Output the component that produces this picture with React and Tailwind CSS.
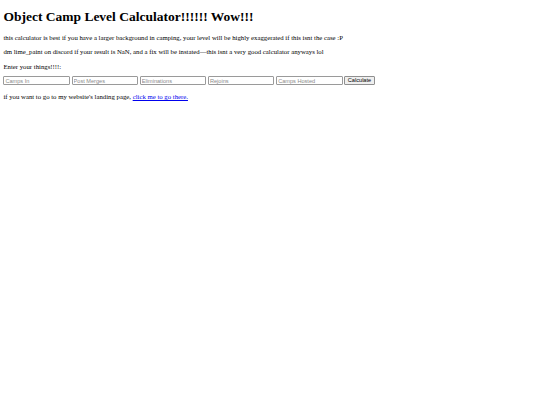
export default function App() {
  const fields = ["Camps In", "Post Merges", "Eliminations", "Rejoins", "Camps Hosted"];
  return (
    <div className="bg-white min-h-[405px] px-[3.4px] py-[0.1px] font-['Liberation_Serif',serif] text-[6.75px] leading-[1.15] text-black">
      <h1 className="text-[13.5px] font-bold my-[9px] leading-[1.15]">Object Camp Level Calculator!!!!!! Wow!!!</h1>
      <p className="my-[6.75px]">this calculator is best if you have a larger background in camping, your level will be highly exaggerated if this isnt the case :P</p>
      <p className="my-[6.75px]">dm lime_paint on discord if your result is NaN, and a fix will be instated—this isnt a very good calculator anyways lol</p>
      <p className="mt-[6.75px] mb-[6px]">Enter your things!!!!:</p>
      <div className="flex items-center gap-[1.7px]">
        {fields.map((f) => (
          <input
            key={f}
            placeholder={f}
            className="w-[66.5px] h-[9px] border border-[#9a9a9a] rounded-[1px] px-[1px] bg-white font-['Liberation_Sans',sans-serif] text-[5.6px] placeholder:text-[#8a8a8a] outline-none"
          />
        ))}
        <button className="h-[9px] px-[2.5px] border border-[#8f8f8f] rounded-[1px] bg-[#efefef] font-['Liberation_Sans',sans-serif] text-[5.6px] leading-none text-black">Calculate</button>
      </div>
      <p className="mt-[8px] mb-[6.75px]">
        if you want to go to my website's landing page, <a href="#" className="text-[#0000ee] underline">click me to go there.</a>
      </p>
    </div>
  );
}
